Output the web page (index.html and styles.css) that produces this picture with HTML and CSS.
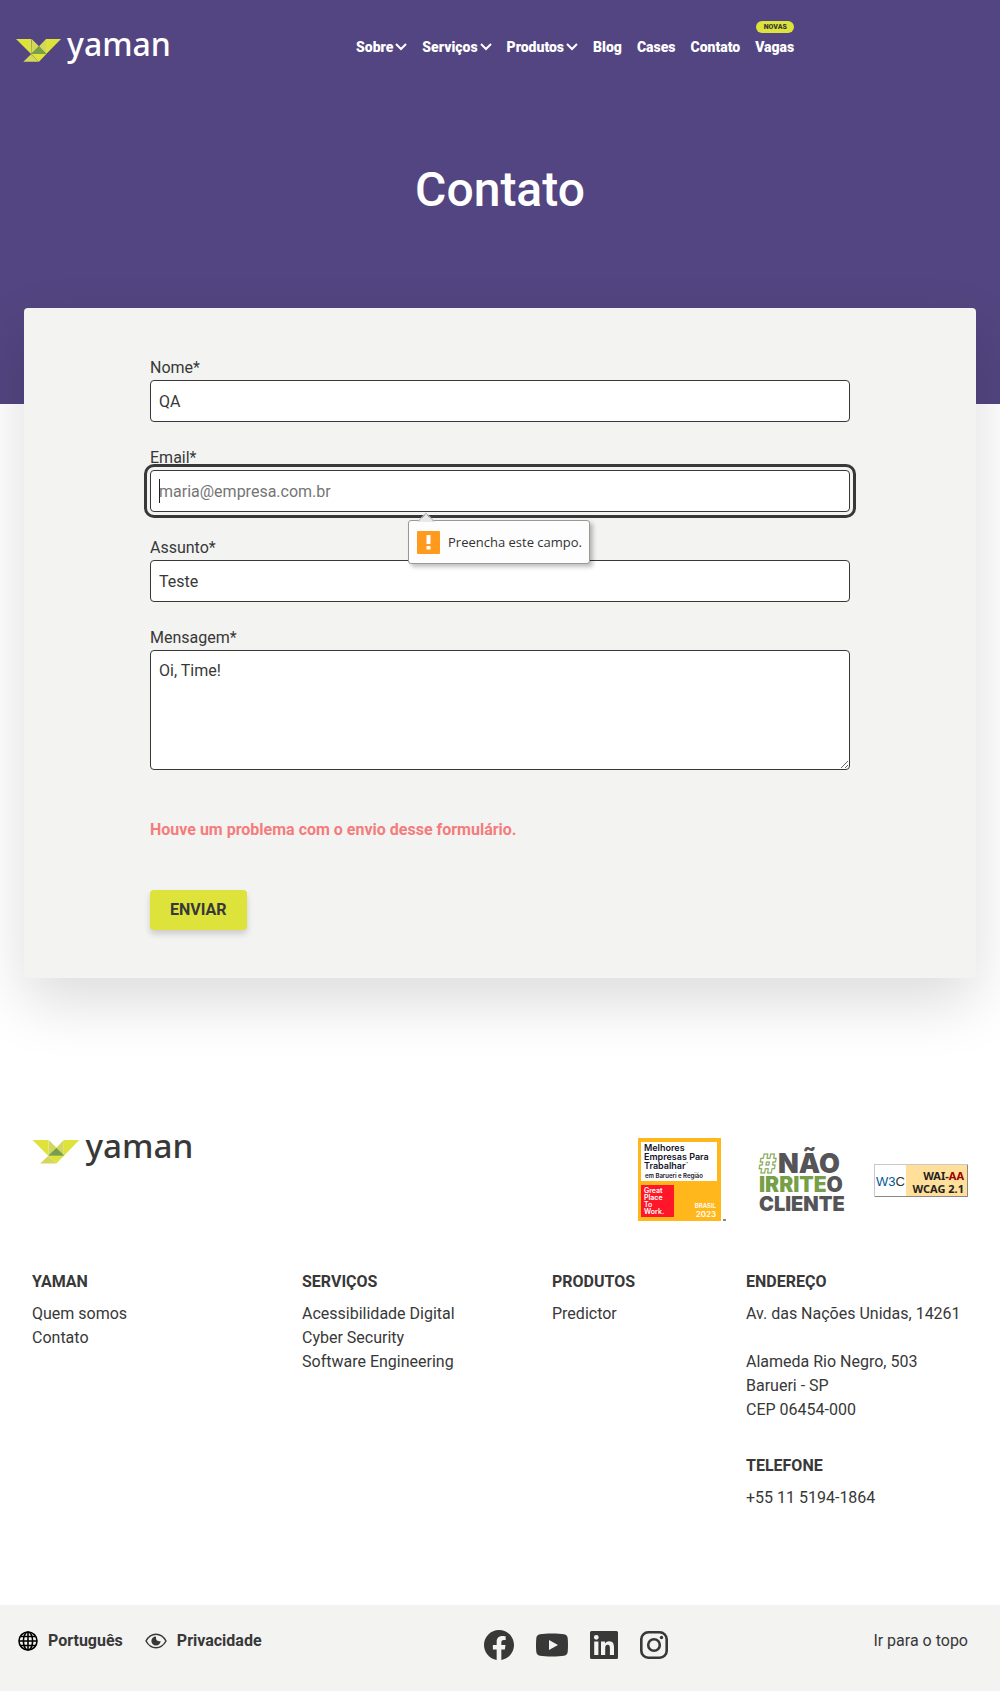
FILE: index.html
```html
<!DOCTYPE html>
<html lang="pt-BR">
<head>
<meta charset="utf-8">
<meta name="viewport" content="width=device-width, initial-scale=1">
<title>Contato | Yaman</title>
<link rel="stylesheet" href="styles.css">
</head>
<body>
<svg class="sprite" width="0" height="0" aria-hidden="true">
  <symbol id="logo" viewBox="0 0 154 26">
    <g transform="translate(0 2) scale(.3333)">
      <path fill="#dde33a" d="M0 0h46v46zM90 0h45L90 46zM45 45h46L69 68z"/>
      <path fill="#d3d75a" d="M47 0l22 22-23 23zM90 0L69 22l21 23zM45 46l24 22H22z"/>
      <path fill="#779f48" d="M69 22l23 23H45z"/>
    </g>
    <text x="51" y="19" class="logo-text">yaman</text>
  </symbol>
  <symbol id="chevron" viewBox="0 0 12 8"><path d="M1 1l5 5 5-5" fill="none" stroke="currentColor" stroke-width="2"/></symbol>
</svg>

<div class="hero">
  <header class="header">
    <a href="#" class="logo" aria-label="Yaman"><svg width="154" height="26"><use href="#logo"/></svg></a>
    <nav class="nav">
      <a href="#">Sobre <svg width="12" height="8"><use href="#chevron"/></svg></a>
      <a href="#">Serviços <svg width="12" height="8"><use href="#chevron"/></svg></a>
      <a href="#">Produtos <svg width="12" height="8"><use href="#chevron"/></svg></a>
      <a href="#">Blog</a>
      <a href="#">Cases</a>
      <a href="#">Contato</a>
      <a href="#" class="jobs">Vagas<span class="tag">NOVAS</span></a>
    </nav>
  </header>
  <h1 class="title">Contato</h1>
</div>

<main class="main">
  <form class="card" novalidate>
    <div class="fields">
      <div class="field">
        <label for="nome">Nome*</label>
        <input id="nome" type="text" value="QA">
      </div>
      <div class="field">
        <label for="email">Email*</label>
        <input id="email" class="active" type="email" placeholder="maria@empresa.com.br">
        <span class="caret"></span>
        <div class="tooltip" role="alert">
          <span class="warn"><svg width="23" height="23" viewBox="0 0 23 23"><rect width="23" height="23" rx="1" fill="#ff9a1f"/><path d="M9.500 4h4v9h-4zM9.500 15h4v3.500h-4z" fill="#fff"/></svg></span>
          Preencha este campo.
        </div>
      </div>
      <div class="field">
        <label for="assunto">Assunto*</label>
        <input id="assunto" type="text" value="Teste">
      </div>
      <div class="field">
        <label for="mensagem">Mensagem*</label>
        <textarea id="mensagem">Oi, Time!</textarea>
      </div>
      <p class="error">Houve um problema com o envio desse formulário.</p>
      <button type="button" class="submit">ENVIAR</button>
    </div>
  </form>
</main>

<footer>
  <div class="brand-row">
    <a href="#" class="logo dark" aria-label="Yaman"><svg width="161" height="27"><use href="#logo"/></svg></a>
    <div class="seals">
      <svg width="90" height="84" viewBox="0 0 90 84" role="img" aria-label="Great Place To Work">
        <rect width="83" height="83" fill="#ffb71b"/>
        <rect x="3" y="4" width="76" height="39" fill="#fff"/>
        <g class="geo" fill="#14142b">
          <text x="6" y="13" font-size="9">Melhores</text>
          <text x="6" y="22" font-size="9">Empresas Para</text>
          <text x="6" y="31" font-size="9">Trabalhar<tspan font-size="4" dy="-3">™</tspan></text>
          <text x="7" y="40" font-size="6">em Barueri e Região</text>
        </g>
        <rect x="3" y="47" width="33" height="32" fill="#ff1628"/>
        <g class="geo" fill="#fff">
          <text x="6" y="55" font-size="7">Great</text>
          <text x="6" y="62" font-size="7">Place</text>
          <text x="6" y="69" font-size="7">To</text>
          <text x="6" y="76" font-size="7">Work.</text>
          <text x="78" y="70" font-size="6" text-anchor="end">BRASIL</text>
          <text x="78" y="79" font-size="8" text-anchor="end">2023</text>
        </g>
        <path d="M85 82h3" stroke="#14142b"/>
      </svg>
      <svg width="86" height="66" viewBox="0 0 86 66" role="img" aria-label="Não irrite o cliente">
        <g class="heavy" fill="#555457">
          <text x="1" y="26" font-size="26" fill="#fff" stroke="#779f48">#</text>
          <text x="20" y="26" font-size="27">NÃO</text>
          <text x="1" y="45" font-size="21"><tspan fill="#779f48">IRRITE</tspan>O</text>
          <text x="1" y="64" font-size="20">CLIENTE</text>
        </g>
      </svg>
      <svg width="94" height="33" viewBox="0 0 94 33" role="img" aria-label="W3C WAI-AA WCAG 2.1">
        <rect x=".5" y=".5" width="93" height="32" fill="#fff" stroke="#c9c9c9"/>
        <rect x="32" y="1" width="61" height="31" fill="#ffdf9a"/>
        <path d="M1 32.5h92.5V1" fill="none" stroke="#888"/>
        <text x="2" y="22" class="w3" fill="#005a9c">W3<tspan fill="#333">C</tspan></text>
        <text x="90" y="16" class="wai" text-anchor="end">WAI-<tspan fill="#990000">AA</tspan></text>
        <text x="90" y="29" class="wai" text-anchor="end">WCAG 2.1</text>
      </svg>
    </div>
  </div>

  <div class="columns">
    <section>
      <h2>YAMAN</h2>
      <ul><li><a href="#">Quem somos</a></li><li><a href="#">Contato</a></li></ul>
    </section>
    <section>
      <h2>SERVIÇOS</h2>
      <ul><li><a href="#">Acessibilidade Digital</a></li><li><a href="#">Cyber Security</a></li><li><a href="#">Software Engineering</a></li></ul>
    </section>
    <section>
      <h2>PRODUTOS</h2>
      <ul><li><a href="#">Predictor</a></li></ul>
    </section>
    <section>
      <h2>ENDEREÇO</h2>
      <address>Av. das Nações Unidas, 14261<br><br>Alameda Rio Negro, 503<br>Barueri - SP<br>CEP 06454-000</address>
      <h2 class="phone">TELEFONE</h2>
      <a href="#">+55 11 5194-1864</a>
    </section>
  </div>

  <div class="bottom">
    <div class="prefs">
      <a href="#">
        <svg width="20" height="20" viewBox="0 0 20 20" fill="none" stroke="#000" stroke-width="1.6"><circle cx="10" cy="10" r="9"/><ellipse cx="10" cy="10" rx="4.6" ry="9"/><path d="M10 1v18M1 10h18M2.500 5.500h15M2.500 14.500h15"/></svg>
        Português</a>
      <a href="#">
        <svg width="22" height="16" viewBox="0 0 22 16"><path d="M1 8c5-9 15-9 20 0-5 9-15 9-20 0z" fill="none" stroke="#383838" stroke-width="1.500"/><path d="M11 3.400A4.600 4.600 0 1 0 15.600 8c-2 1-4.500-.5-4.600-2.500 0-.9 0-1.500 0-2.100z" fill="#383838"/></svg>
        Privacidade</a>
    </div>
    <div class="social">
      <a href="#" aria-label="Facebook"><svg width="30" height="30" viewBox="0 0 24 24"><path d="M24 12.070C24 5.400 18.630 0 12 0S0 5.400 0 12.070C0 18.100 4.390 23.100 10.130 24v-8.440H7.080v-3.490h3.050V9.410c0-3.020 1.790-4.690 4.530-4.690 1.310 0 2.680.24 2.680.24v2.970h-1.510c-1.490 0-1.960.93-1.960 1.890v2.250h3.330l-.53 3.490h-2.800V24C19.610 23.100 24 18.100 24 12.070z"/></svg></a>
      <a href="#" aria-label="YouTube"><svg width="32" height="24" viewBox="0 0 32 24"><path fill-rule="evenodd" d="M4 1.200C9 .2 23 .2 28 1.200c2.600.5 3.500 2 3.700 4 .4 4 .4 9.600 0 13.600-.2 2-1.100 3.500-3.700 4-5 .9-19 .9-24 0-2.600-.5-3.500-2-3.700-4-.4-4-.4-9.600 0-13.600.2-2 1.100-3.500 3.700-4zM13 7v10l9-5z"/></svg></a>
      <a href="#" aria-label="LinkedIn"><svg width="28" height="28" viewBox="0 0 28 28"><path fill-rule="evenodd" d="M1.500 0h25A1.500 1.500 0 0 1 28 1.500v25a1.500 1.500 0 0 1-1.500 1.500h-25A1.500 1.500 0 0 1 0 26.500v-25A1.500 1.500 0 0 1 1.500 0zM4.200 10.500V24h4.200V10.500zM6.300 3.900a2.400 2.400 0 1 0 0 4.800 2.400 2.400 0 0 0 0-4.800zM11 10.500V24h4.200v-6.700c0-1.800.4-3.500 2.500-3.500s2.200 2 2.200 3.600V24H24v-7.400c0-3.600-.8-6.400-5-6.400-2 0-3.400 1.100-3.900 2.200H15v-1.900z"/></svg></a>
      <a href="#" aria-label="Instagram"><svg width="28" height="28" viewBox="0 0 28 28" fill="none" stroke="#383838" stroke-width="2.600"><rect x="1.300" y="1.300" width="25.400" height="25.400" rx="7"/><circle cx="14" cy="14" r="5.800"/><circle cx="21.500" cy="6.500" r="1.700" fill="#383838" stroke="none"/></svg></a>
    </div>
    <a href="#" class="top">Ir para o topo</a>
  </div>
</footer>
</body>
</html>
```

FILE: styles.css
```css
* { box-sizing: border-box; }
body {
  margin: 0;
  background: #fff;
  color: #383838;
  font-family: Roboto, "Liberation Sans", sans-serif;
  font-size: 16px;
  line-height: 24px;
}
a { color: inherit; text-decoration: none; }
svg { display: block; flex: none; overflow: visible; }
symbol { overflow: visible; }
.sprite { position: absolute; }
.logo { color: #fff; }
.logo.dark { color: #383838; }
.logo-text { font: 500 32px "Noto Sans", sans-serif; fill: currentColor; }

.hero { background: #534581; color: #fff; padding-bottom: 182px; }
.header {
  display: grid;
  grid-template-columns: 340px auto;
  align-items: start;
  padding: 35px 16px 0;
}
.logo svg { margin-top: 2px; }
.nav { display: flex; gap: 15px; font-size: 14px; font-weight: 900; }
.nav a { display: flex; align-items: center; gap: 2px; }
.jobs { position: relative; }
.tag {
  position: absolute;
  right: 0;
  bottom: 26px;
  width: 38px;
  border-radius: 6px;
  background: #dde33a;
  color: #383838;
  font-size: 7px;
  line-height: 12px;
  text-align: center;
}
.title { margin: 95px 0 0; font-size: 48px; line-height: 64px; font-weight: 500; text-align: center; }

.main { padding: 0 24px; margin-top: -96px; }
.card {
  background: #f3f3f1;
  border-radius: 4px;
  padding: 48px 24px;
  box-shadow: 0 24px 60px rgba(0, 0, 0, .14);
}
.fields { max-width: 700px; margin: 0 auto; }
.field { position: relative; margin-bottom: 24px; }
.field label { display: block; }
.field input, .field textarea {
  display: block;
  width: 100%;
  height: 42px;
  padding: 8px;
  border: 1px solid #383838;
  border-radius: 4px;
  background: #fff;
  color: #383838;
  font: inherit;
}
.field textarea { height: 120px; resize: vertical; }
.field input::placeholder { color: #757575; }
.field .active, .field .active:focus { outline: 3px solid #383838; outline-offset: 3px; }
.caret { position: absolute; left: 9px; bottom: 9px; width: 1px; height: 24px; background: #222; }
.tooltip {
  position: absolute;
  z-index: 1;
  top: 74px;
  left: 258px;
  display: flex;
  align-items: center;
  gap: 8px;
  width: 182px;
  height: 44px;
  padding: 0 8px;
  border: 1px solid #999;
  border-radius: 3px;
  background: #fdfdfd;
  box-shadow: 3px 3px 4px rgba(0, 0, 0, .25);
  color: #333;
  font: 13px/20px "Open Sans", sans-serif;
  white-space: nowrap;
}
.tooltip::before {
  content: "";
  position: absolute;
  top: -6px;
  left: 11px;
  width: 11px;
  height: 11px;
  border: solid #bbb;
  border-width: 1px 0 0 1px;
  background: linear-gradient(135deg, #e8e8e8 50%, #fdfdfd 50%);
  transform: rotate(45deg);
}
.error { margin: 48px 0; color: #f47c7c; font-weight: 700; }
.submit {
  display: block;
  height: 40px;
  padding: 0 20px;
  border: 0;
  border-radius: 4px;
  background: #dde33a;
  box-shadow: 0 4px 6px rgba(0, 0, 0, .16);
  color: #383838;
  font: 700 16px/24px Roboto, sans-serif;
}

.brand-row { display: flex; justify-content: space-between; align-items: flex-start; padding: 160px 32px 0; }
.logo.dark svg { margin-top: 0; }
.seals { display: flex; align-items: center; gap: 30px; }
.geo { font-family: Inter, sans-serif; font-weight: 600; }
.heavy { font-family: Inter, sans-serif; font-weight: 900; }
.w3 { font: 13px "Liberation Sans", sans-serif; }
.wai { font: 700 11px "Noto Sans", sans-serif; fill: #222; }

.columns { display: grid; grid-template-columns: 270fr 250fr 194fr 222fr; padding: 48px 32px 95px; }
.columns h2 { margin: 0 0 8px; font-size: 16px; line-height: 24px; font-weight: 700; }
.columns h2.phone { margin-top: 32px; }
.columns ul { list-style: none; margin: 0; padding: 0; }
address { font-style: normal; white-space: nowrap; }

.bottom {
  display: grid;
  grid-template-columns: 466fr 242fr 242fr;
  background: #f3f3f1;
  padding: 24px 32px 30px 18px;
}
.prefs { display: flex; gap: 22px; font-weight: 700; align-items: flex-start; }
.prefs a { display: flex; align-items: center; gap: 10px; }
.social { display: flex; align-items: center; gap: 22px; height: 32px; fill: #383838; }
.top { justify-self: end; }
```
